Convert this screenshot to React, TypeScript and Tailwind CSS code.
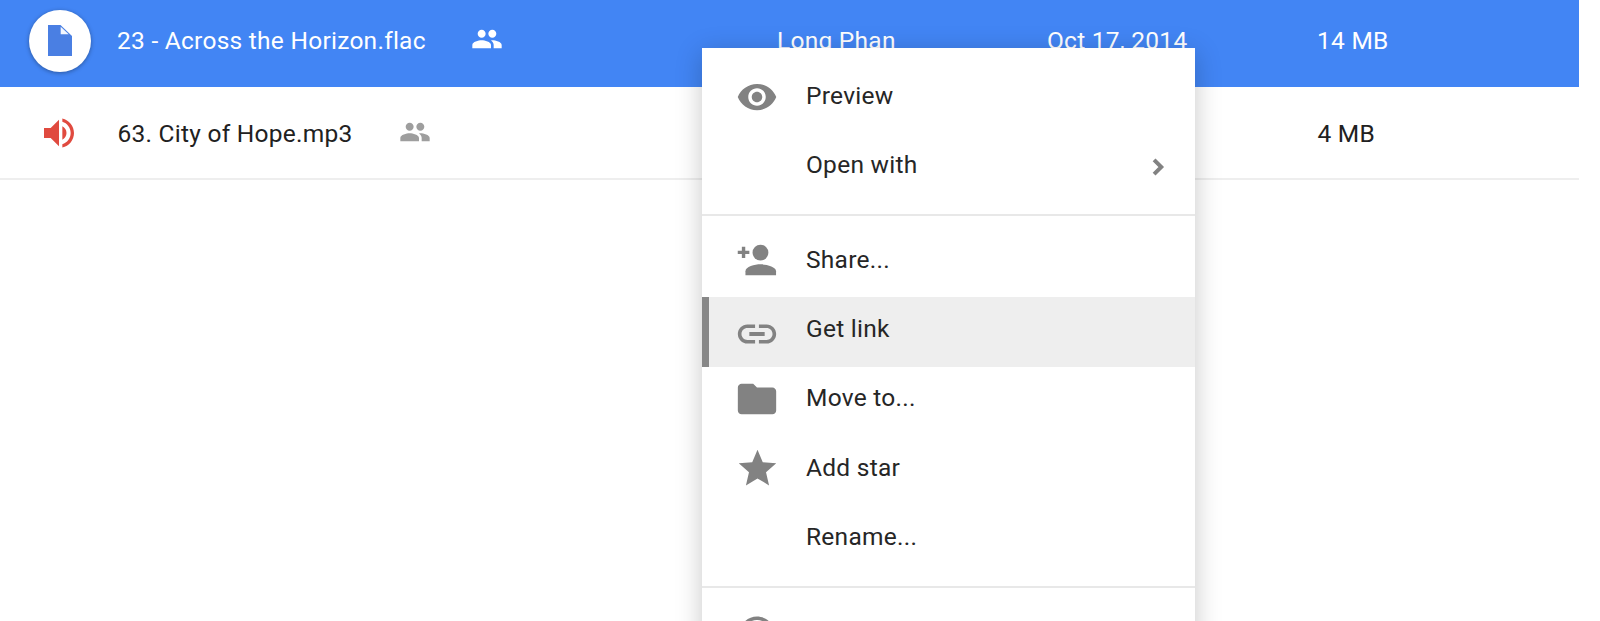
import React from "react";

const P = {
  people: "M16 11c1.66 0 2.99-1.34 2.99-3S17.66 5 16 5c-1.66 0-3 1.34-3 3s1.34 3 3 3zm-8 0c1.66 0 2.99-1.34 2.99-3S9.66 5 8 5C6.34 5 5 6.34 5 8s1.34 3 3 3zm0 2c-2.33 0-7 1.17-7 3.5V19h14v-2.5c0-2.33-4.67-3.5-7-3.5zm8 0c-.29 0-.62.02-.97.05 1.16.84 1.97 1.97 1.97 3.45V19h6v-2.5c0-2.33-4.67-3.5-7-3.5z",
  eye: "M12 4.5C7 4.5 2.73 7.61 1 12c1.73 4.39 6 7.5 11 7.5s9.27-3.11 11-7.5c-1.73-4.39-6-7.5-11-7.5zM12 17c-2.76 0-5-2.24-5-5s2.24-5 5-5 5 2.24 5 5-2.24 5-5 5zm0-8c-1.66 0-3 1.34-3 3s1.34 3 3 3 3-1.34 3-3-1.34-3-3-3z",
  link: "M3.9 12c0-1.71 1.39-3.1 3.1-3.1h4V7H7c-2.76 0-5 2.24-5 5s2.24 5 5 5h4v-1.9H7c-1.71 0-3.1-1.39-3.1-3.1zM8 13h8v-2H8v2zm9-6h-4v1.9h4c1.71 0 3.1 1.39 3.1 3.1s-1.39 3.1-3.1 3.1h-4V17h4c2.76 0 5-2.24 5-5s-2.24-5-5-5z",
  folder: "M10 4H4c-1.1 0-1.99.9-1.99 2L2 18c0 1.1.9 2 2 2h16c1.1 0 2-.9 2-2V8c0-1.1-.9-2-2-2h-8l-2-2z",
  star: "M12 17.27L18.18 21l-1.64-7.03L22 9.24l-7.19-.61L12 2 9.19 8.63 2 9.24l5.46 4.73L5.82 21z",
  volume: "M3 9v6h4l5 5V4L7 9H3zm13.5 3c0-1.77-1.02-3.29-2.5-4.03v8.05c1.48-.73 2.5-2.25 2.5-4.02zM14 3.23v2.06c2.89.86 5 3.54 5 6.71s-2.11 5.85-5 6.71v2.06c4.01-.91 7-4.49 7-8.77s-2.99-7.86-7-8.77z",
  chevron: "M10 6L8.59 7.41 13.17 12l-4.58 4.59L10 18l6-6z",
  help: "M11 18h2v-2h-2v2zm1-16C6.48 2 2 6.48 2 12s4.48 10 10 10 10-4.48 10-10S17.52 2 12 2zm0 18c-4.41 0-8-3.59-8-8s3.59-8 8-8 8 3.59 8 8-3.59 8-8 8zm0-14c-2.21 0-4 1.79-4 4h2c0-1.1.9-2 2-2s2 .9 2 2c0 2-3 1.75-3 5h2c0-2.25 3-2.5 3-5 0-2.21-1.79-4-4-4z",
};

function Icon({ d, className }: { d: string; className: string }) {
  return (
    <svg viewBox="0 0 24 24" className={className} fill="currentColor" aria-hidden="true">
      <path d={d} />
    </svg>
  );
}

function ShareIcon() {
  return (
    <svg viewBox="-1.75 -5.65 42 42" className="h-[42px] w-[42px] -translate-y-[2px] text-[#828282]" fill="currentColor" aria-hidden="true">
      <circle cx="22.7" cy="7.9" r="7.9" />
      <path d="M7.7 30.7V26.5C7.7 22.2 16.8 19.7 23 19.7S38.3 22.2 38.3 26.5V30.7Z" />
      <path d="M4.1 2H7.5V6H11.6V9.4H7.5V13.4H4.1V9.4H0V6H4.1Z" />
    </svg>
  );
}

function MenuRow({ icon, label, active, chevron }: { icon?: React.ReactNode; label: string; active?: boolean; chevron?: boolean }) {
  return (
    <div className={`flex h-[69.4px] items-center ${active ? "bg-[#eeeeee] border-l-[7px] border-[#878787] pl-[27px]" : "pl-[34px]"} pr-[22px]`}>
      <div className="flex w-[70px] shrink-0 items-center">{icon}</div>
      <span className="flex-1 pb-[5px] text-[#262626]">{label}</span>
      {chevron && (
        <svg viewBox="0 0 24 24" className="mb-[3px] h-[30px] w-[30px] text-[#828282]" fill="currentColor" stroke="currentColor" strokeWidth="1.2" aria-hidden="true">
          <path d={P.chevron} />
        </svg>
      )}
    </div>
  );
}

export default function App() {
  return (
    <div className="relative h-[621px] w-[1600px] overflow-hidden bg-white text-[24.5px] tracking-[0.26px]" style={{ fontFamily: "Roboto, sans-serif" }}>
      <div className="w-[1579px]">
        <div className="flex h-[87px] items-center bg-[#4285f4] pb-[6px] text-white">
          <div className="ml-[29px] flex h-[62px] w-[62px] shrink-0 items-center justify-center rounded-full bg-white shadow-[0_1px_4px_rgba(0,0,0,0.35)]">
            <svg viewBox="0 0 24 31" className="h-[31px] w-[24px]" aria-hidden="true">
              <path d="M0 0H12.5L24 11V31H0Z" fill="#4a7fe3" />
              <path d="M12.7 1.7L20.7 9.3H12.7Z" fill="#f2f6fe" />
            </svg>
          </div>
          <div className="ml-[26px] mt-[1px] w-[354px] shrink-0">23 - Across the Horizon.flac</div>
          <Icon d={P.people} className="mb-[4px] h-[32px] w-[32px] shrink-0" />
          <div className="ml-[274px] mt-[1px] w-[270px] shrink-0">Long Phan</div>
          <div className="mt-[1px] w-[270px] shrink-0">Oct 17, 2014</div>
          <div className="mt-[1px]">14 MB</div>
        </div>
        <div className="flex h-[93px] items-center border-b-2 border-[#eeeeee] text-[#212121]">
          <Icon d={P.volume} className="ml-[39px] h-[40px] w-[40px] shrink-0 text-[#e04a3f]" />
          <div className="ml-[38.5px] mt-[3px] w-[281px] shrink-0">63. City of Hope.mp3</div>
          <Icon d={P.people} className="mb-[2px] h-[32px] w-[32px] shrink-0 text-[#9e9e9e]" />
          <div className="ml-[887px] mt-[3px]">4 MB</div>
        </div>
      </div>

      <div className="absolute left-[702px] top-[48px] w-[493px] bg-white pt-[16px] shadow-[0_5px_25px_rgba(0,0,0,0.22)]">
        <MenuRow icon={<Icon d={P.eye} className="h-[42px] w-[42px] -translate-y-[2px] text-[#828282]" />} label="Preview" />
        <MenuRow label="Open with" chevron />
        <div className="mb-[12px] mt-[11px] h-[2px] bg-[#e8e8e8]" />
        <MenuRow icon={<ShareIcon />} label="Share..." />
        <MenuRow icon={<Icon d={P.link} className="-ml-[2px] h-[46px] w-[46px] translate-y-[2px] text-[#828282]" />} label="Get link" active />
        <MenuRow icon={<Icon d={P.folder} className="-ml-[2px] h-[46px] w-[46px] -translate-y-[2px] text-[#828282]" />} label="Move to..." />
        <MenuRow icon={<Icon d={P.star} className="-ml-[1px] h-[45px] w-[45px] -translate-y-[2px] text-[#828282]" />} label="Add star" />
        <MenuRow label="Rename..." />
        <div className="mb-[12px] mt-[11px] h-[2px] bg-[#e8e8e8]" />
        <MenuRow icon={<Icon d={P.help} className="h-[42px] w-[42px] text-[#828282]" />} label="" />
      </div>
    </div>
  );
}
